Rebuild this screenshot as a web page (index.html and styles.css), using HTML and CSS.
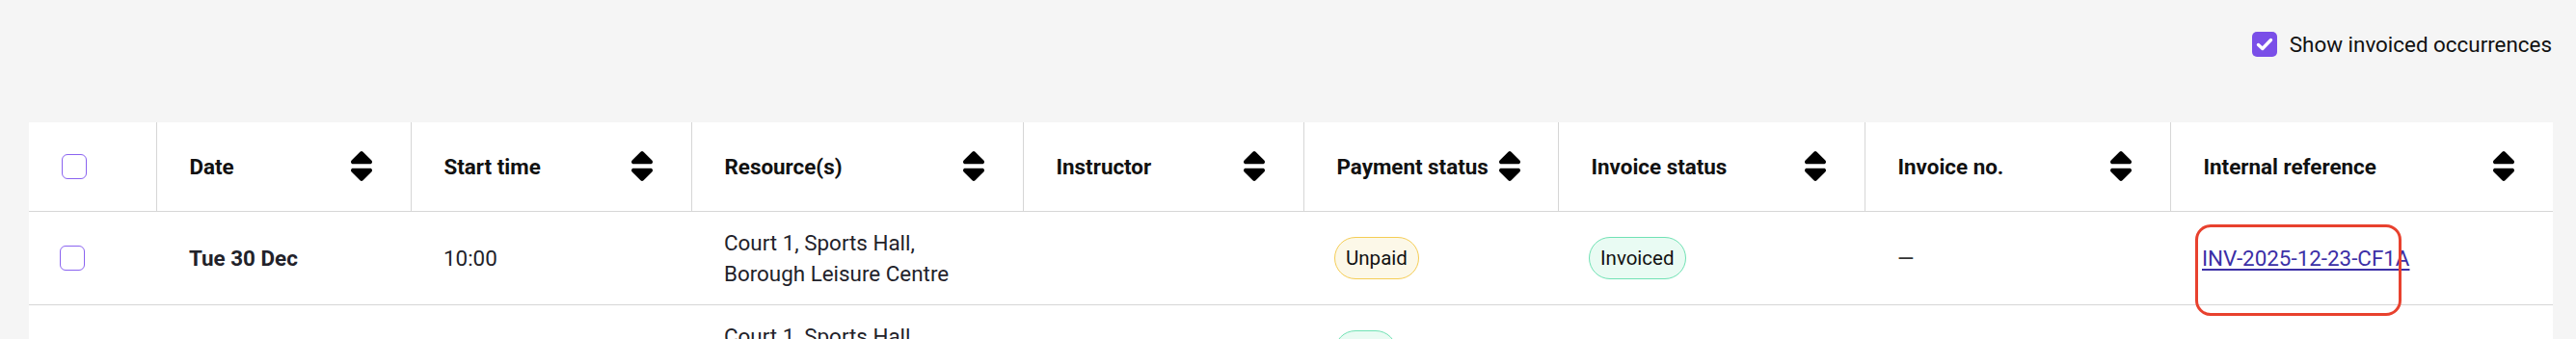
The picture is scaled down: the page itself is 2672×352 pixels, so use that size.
FILE: index.html
```html
<!DOCTYPE html>
<html lang="en">
<head>
<meta charset="utf-8">
<title>Occurrences</title>
<link rel="stylesheet" href="styles.css">
</head>
<body>
<div class="page">
  <div class="toolbar">
    <label class="toggle">
      <span class="check-filled">
        <svg viewBox="0 0 26 26" width="26" height="26"><polyline points="6.5 13.5 10.8 17.5 19.5 8.5" fill="none" stroke="#fff" stroke-width="3.4" stroke-linecap="round" stroke-linejoin="round"/></svg>
      </span>
      <span class="toggle-label">Show invoiced occurrences</span>
    </label>
  </div>

  <div class="table-wrap">
    <table class="grid">
      <colgroup>
        <col class="c-check"><col class="c-date"><col class="c-time"><col class="c-res"><col class="c-inst"><col class="c-pay"><col class="c-inv"><col class="c-no"><col class="c-ref">
      </colgroup>
      <thead>
        <tr>
          <th><span class="box"></span></th>
          <th><div class="th-in"><span>Date</span><svg class="sort" viewBox="0 32 320 448"><path d="M137.4 41.4c12.5-12.5 32.8-12.5 45.3 0l128 128c9.2 9.2 11.9 22.9 6.9 34.9s-16.6 19.8-29.6 19.8H32c-12.9 0-24.6-7.8-29.6-19.8s-2.2-25.7 6.9-34.9l128-128zm0 429.3l-128-128c-9.2-9.2-11.9-22.9-6.9-34.9s16.6-19.8 29.6-19.8H288c12.9 0 24.6 7.8 29.6 19.8s2.2 25.7-6.9 34.9l-128 128c-12.5 12.5-32.8 12.5-45.3 0z"/></svg></div></th>
          <th><div class="th-in"><span>Start time</span><svg class="sort" viewBox="0 32 320 448"><path d="M137.4 41.4c12.5-12.5 32.8-12.5 45.3 0l128 128c9.2 9.2 11.9 22.9 6.9 34.9s-16.6 19.8-29.6 19.8H32c-12.9 0-24.6-7.8-29.6-19.8s-2.2-25.7 6.9-34.9l128-128zm0 429.3l-128-128c-9.2-9.2-11.9-22.9-6.9-34.9s16.6-19.8 29.6-19.8H288c12.9 0 24.6 7.8 29.6 19.8s2.2 25.7-6.9 34.9l-128 128c-12.5 12.5-32.8 12.5-45.3 0z"/></svg></div></th>
          <th><div class="th-in"><span>Resource(s)</span><svg class="sort" viewBox="0 32 320 448"><path d="M137.4 41.4c12.5-12.5 32.8-12.5 45.3 0l128 128c9.2 9.2 11.9 22.9 6.9 34.9s-16.6 19.8-29.6 19.8H32c-12.9 0-24.6-7.8-29.6-19.8s-2.2-25.7 6.9-34.9l128-128zm0 429.3l-128-128c-9.2-9.2-11.9-22.9-6.9-34.9s16.6-19.8 29.6-19.8H288c12.9 0 24.6 7.8 29.6 19.8s2.2 25.7-6.9 34.9l-128 128c-12.5 12.5-32.8 12.5-45.3 0z"/></svg></div></th>
          <th><div class="th-in"><span>Instructor</span><svg class="sort" viewBox="0 32 320 448"><path d="M137.4 41.4c12.5-12.5 32.8-12.5 45.3 0l128 128c9.2 9.2 11.9 22.9 6.9 34.9s-16.6 19.8-29.6 19.8H32c-12.9 0-24.6-7.8-29.6-19.8s-2.2-25.7 6.9-34.9l128-128zm0 429.3l-128-128c-9.2-9.2-11.9-22.9-6.9-34.9s16.6-19.8 29.6-19.8H288c12.9 0 24.6 7.8 29.6 19.8s2.2 25.7-6.9 34.9l-128 128c-12.5 12.5-32.8 12.5-45.3 0z"/></svg></div></th>
          <th><div class="th-in"><span>Payment status</span><svg class="sort" viewBox="0 32 320 448"><path d="M137.4 41.4c12.5-12.5 32.8-12.5 45.3 0l128 128c9.2 9.2 11.9 22.9 6.9 34.9s-16.6 19.8-29.6 19.8H32c-12.9 0-24.6-7.8-29.6-19.8s-2.2-25.7 6.9-34.9l128-128zm0 429.3l-128-128c-9.2-9.2-11.9-22.9-6.9-34.9s16.6-19.8 29.6-19.8H288c12.9 0 24.6 7.8 29.6 19.8s2.2 25.7-6.9 34.9l-128 128c-12.5 12.5-32.8 12.5-45.3 0z"/></svg></div></th>
          <th><div class="th-in"><span>Invoice status</span><svg class="sort" viewBox="0 32 320 448"><path d="M137.4 41.4c12.5-12.5 32.8-12.5 45.3 0l128 128c9.2 9.2 11.9 22.9 6.9 34.9s-16.6 19.8-29.6 19.8H32c-12.9 0-24.6-7.8-29.6-19.8s-2.2-25.7 6.9-34.9l128-128zm0 429.3l-128-128c-9.2-9.2-11.9-22.9-6.9-34.9s16.6-19.8 29.6-19.8H288c12.9 0 24.6 7.8 29.6 19.8s2.2 25.7-6.9 34.9l-128 128c-12.5 12.5-32.8 12.5-45.3 0z"/></svg></div></th>
          <th><div class="th-in"><span>Invoice no.</span><svg class="sort" viewBox="0 32 320 448"><path d="M137.4 41.4c12.5-12.5 32.8-12.5 45.3 0l128 128c9.2 9.2 11.9 22.9 6.9 34.9s-16.6 19.8-29.6 19.8H32c-12.9 0-24.6-7.8-29.6-19.8s-2.2-25.7 6.9-34.9l128-128zm0 429.3l-128-128c-9.2-9.2-11.9-22.9-6.9-34.9s16.6-19.8 29.6-19.8H288c12.9 0 24.6 7.8 29.6 19.8s2.2 25.7-6.9 34.9l-128 128c-12.5 12.5-32.8 12.5-45.3 0z"/></svg></div></th>
          <th><div class="th-in"><span>Internal reference</span><svg class="sort" viewBox="0 32 320 448"><path d="M137.4 41.4c12.5-12.5 32.8-12.5 45.3 0l128 128c9.2 9.2 11.9 22.9 6.9 34.9s-16.6 19.8-29.6 19.8H32c-12.9 0-24.6-7.8-29.6-19.8s-2.2-25.7 6.9-34.9l128-128zm0 429.3l-128-128c-9.2-9.2-11.9-22.9-6.9-34.9s16.6-19.8 29.6-19.8H288c12.9 0 24.6 7.8 29.6 19.8s2.2 25.7-6.9 34.9l-128 128c-12.5 12.5-32.8 12.5-45.3 0z"/></svg></div></th>
        </tr>
      </thead>
      <tbody>
        <tr>
          <td><span class="box"></span></td>
          <td class="strong">Tue 30 Dec</td>
          <td>10:00</td>
          <td>Court 1, Sports Hall,<br>Borough Leisure Centre</td>
          <td></td>
          <td><span class="badge badge-unpaid">Unpaid</span></td>
          <td><span class="badge badge-ok">Invoiced</span></td>
          <td class="muted">—</td>
          <td class="ref-cell"><a class="ref-link" href="#">INV-2025-12-23-CF1A</a><span class="highlight"></span></td>
        </tr>
        <tr>
          <td><span class="box"></span></td>
          <td class="strong">Tue 30 Dec</td>
          <td>11:00</td>
          <td>Court 1, Sports Hall,<br>Borough Leisure Centre</td>
          <td></td>
          <td><span class="badge badge-ok">Paid</span></td>
          <td class="muted">—</td>
          <td class="muted">—</td>
          <td class="muted">—</td>
        </tr>
      </tbody>
    </table>
  </div>
</div>
</body>
</html>
```

FILE: styles.css
```css
* { box-sizing: border-box; }

html, body {
  margin: 0;
  padding: 0;
  background: #f5f5f5;
}

body {
  font-family: Roboto, "Liberation Sans", Arial, sans-serif;
  font-size: 22.4px;
  color: #1f1f26;
}

.page {
  display: flex;
  flex-direction: column;
}

.toolbar {
  display: flex;
  justify-content: flex-end;
  padding: 33px 25px 0 0;
  height: 127px;
}

.toggle {
  display: flex;
  align-items: center;
  gap: 13px;
  height: 26px;
  cursor: pointer;
}

.check-filled {
  width: 26px;
  height: 26px;
  border-radius: 5px;
  background: #7a4fe8;
  display: flex;
}

.toggle-label {
  color: #111;
  font-size: 22.4px;
  line-height: 26px;
}

.table-wrap {
  margin: 0 24px 0 30px;
  background: #fff;
}

.grid {
  width: 2618px;
  table-layout: fixed;
  border-collapse: collapse;
  background: #fff;
}

.c-check { width: 132px; }
.c-date { width: 264px; }
.c-time { width: 291px; }
.c-res { width: 344px; }
.c-inst { width: 291px; }
.c-pay { width: 264px; }
.c-inv { width: 318px; }
.c-no { width: 317px; }
.c-ref { width: 397px; }

th {
  height: 92px;
  padding: 0 40px 0 34px;
  text-align: left;
  font-weight: 700;
  color: #111;
  border-right: 1px solid #d6d6d6;
  border-bottom: 1px solid #d6d6d6;
  vertical-align: middle;
}

th:last-child { border-right: none; }

.th-in {
  display: flex;
  align-items: center;
  justify-content: space-between;
  gap: 11px;
  white-space: nowrap;
}

.sort {
  width: 22px;
  height: 31px;
  flex: none;
  fill: #000;
}

td {
  padding: 16px 34px;
  line-height: 32px;
  vertical-align: middle;
  border-bottom: 1px solid #d6d6d6;
  color: #22222a;
}

.strong { font-weight: 700; }

.muted { color: #333; }

.box {
  display: block;
  width: 26px;
  height: 26px;
  border: 1.5px solid #8a63f0;
  border-radius: 6px;
  background: #fff;
}

tbody td:first-child .box { margin-left: -2px; }

.badge {
  display: inline-flex;
  align-items: center;
  height: 44px;
  padding: 0 11px;
  border-radius: 22px;
  font-size: 20.5px;
  color: #111;
  border: 1.5px solid;
  margin-left: -2px;
}

.badge-unpaid {
  background: #fcf8e8;
  border-color: #f5cd55;
}

.badge-ok {
  background: #e9fbf3;
  border-color: #70e2b4;
}

.ref-cell {
  position: relative;
}

.ref-link {
  color: #3b2fa6;
  text-decoration: underline;
  text-underline-offset: 3px;
  margin-left: -1px;
}

.highlight {
  position: absolute;
  left: 26px;
  top: 13px;
  width: 214px;
  height: 95px;
  border: 3px solid #e8412e;
  border-radius: 16px;
  pointer-events: none;
}
```
